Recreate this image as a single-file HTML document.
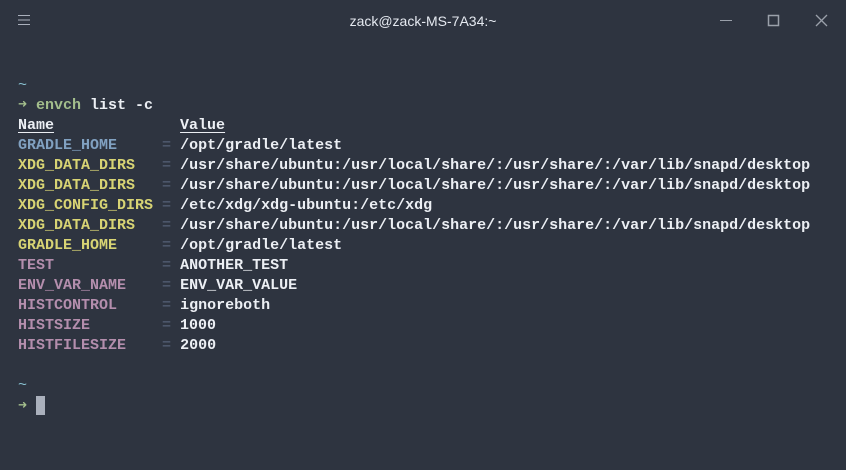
<!DOCTYPE html>
<html><head><style>
html,body{margin:0;padding:0;width:846px;height:470px;background:#2e3440;overflow:hidden}
.title{position:absolute;top:0;left:0;width:846px;height:40px;text-align:center;font:14px "Liberation Sans",sans-serif;line-height:43px;color:#e5e9f0}
pre{position:absolute;left:18px;top:76px;margin:0;font:bold 15px/20px "Liberation Mono",monospace;color:#eceff4}
.c{color:#88c0d0;font-weight:normal}.g{color:#a3be8c}.b{color:#81a1c1}.y{color:#d8d474}.p{color:#b48ead}.e{color:#4c566a}
u{text-decoration:underline;text-underline-offset:3px}
.cur{display:inline-block;width:9px;height:19px;background:#aab0bc;vertical-align:-5px}
</style></head><body>
<svg style="position:absolute;left:18px;top:14px" width="12" height="12"><path d="M0 1.5H12M0 6H12M0 10.5H12" stroke="#aab0bc" stroke-width="1"/></svg>
<div class="title">zack@zack-MS-7A34:~</div>
<svg style="position:absolute;left:720px;top:14px" width="110" height="14">
<path d="M0 6.5H12" stroke="#9aa0aa" stroke-width="1"/>
<rect x="48.5" y="1.5" width="10" height="10" fill="none" stroke="#9aa0aa" stroke-width="1.5"/>
<path d="M96 1L107 12M107 1L96 12" stroke="#9aa0aa" stroke-width="1.3"/>
</svg>
<pre><span class="c">~</span>
<span class="g">➜ envch</span> list -c
<u>Name</u>              <u>Value</u>
<span class="b">GRADLE_HOME</span>     <span class="e">=</span> /opt/gradle/latest
<span class="y">XDG_DATA_DIRS</span>   <span class="e">=</span> /usr/share/ubuntu:/usr/local/share/:/usr/share/:/var/lib/snapd/desktop
<span class="y">XDG_DATA_DIRS</span>   <span class="e">=</span> /usr/share/ubuntu:/usr/local/share/:/usr/share/:/var/lib/snapd/desktop
<span class="y">XDG_CONFIG_DIRS</span> <span class="e">=</span> /etc/xdg/xdg-ubuntu:/etc/xdg
<span class="y">XDG_DATA_DIRS</span>   <span class="e">=</span> /usr/share/ubuntu:/usr/local/share/:/usr/share/:/var/lib/snapd/desktop
<span class="y">GRADLE_HOME</span>     <span class="e">=</span> /opt/gradle/latest
<span class="p">TEST</span>            <span class="e">=</span> ANOTHER_TEST
<span class="p">ENV_VAR_NAME</span>    <span class="e">=</span> ENV_VAR_VALUE
<span class="p">HISTCONTROL</span>     <span class="e">=</span> ignoreboth
<span class="p">HISTSIZE</span>        <span class="e">=</span> 1000
<span class="p">HISTFILESIZE</span>    <span class="e">=</span> 2000

<span class="c">~</span>
<span class="g">➜</span> <span class="cur"></span></pre>
</body></html>
